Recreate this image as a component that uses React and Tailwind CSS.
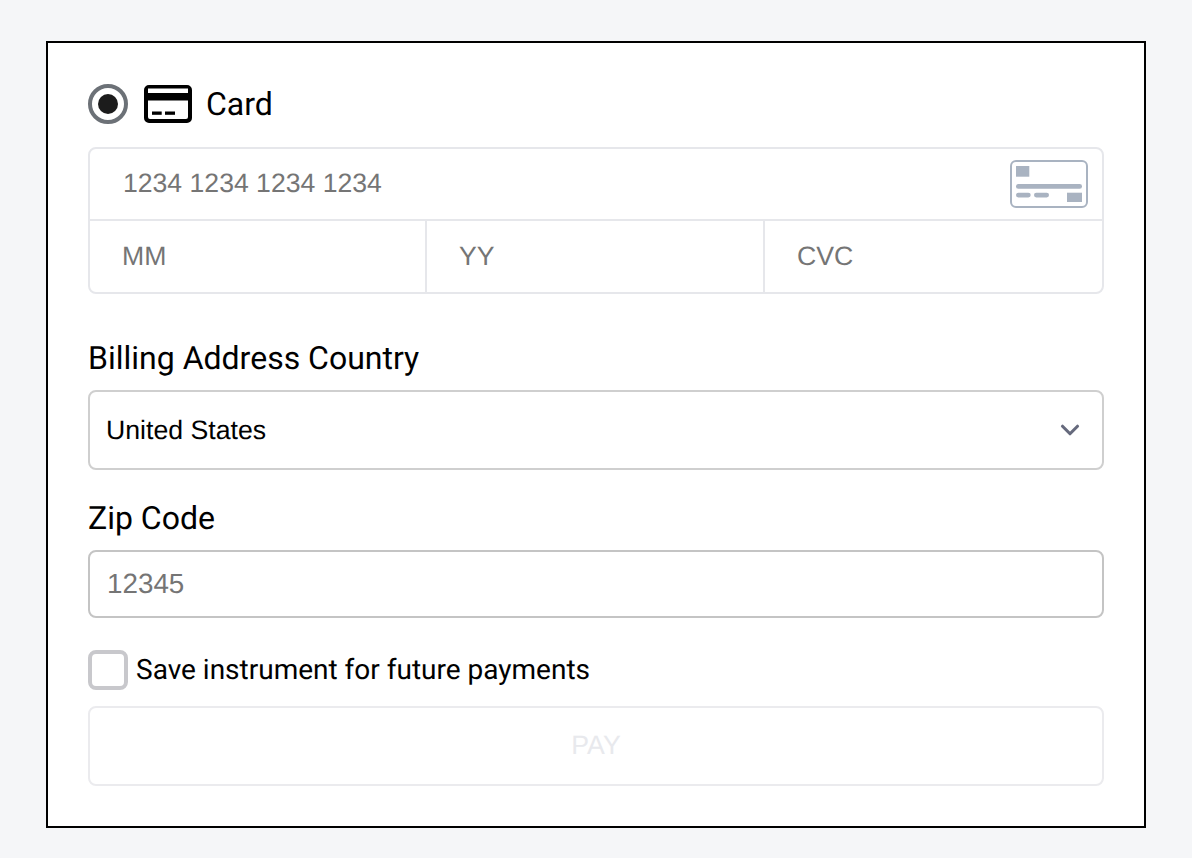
import React from 'react';
import { ChevronDown } from 'lucide-react';

const roboto = "font-['Roboto',sans-serif]";
const arial = "font-['Liberation_Sans',sans-serif]";

const CardIcon = () => (
  <svg width="48" height="38" viewBox="0 0 48 38" className="shrink-0">
    <path
      fillRule="evenodd"
      fill="#000"
      d="M5 0H43A5 5 0 0 1 48 5V33A5 5 0 0 1 43 38H5A5 5 0 0 1 0 33V5A5 5 0 0 1 5 0ZM4 3.5V8H44V3.5ZM4 15.5V32A2 2 0 0 0 6 34H42A2 2 0 0 0 44 32V15.5Z"
    />
    <rect x="8" y="26.5" width="9.7" height="3.3" fill="#000" />
    <rect x="21" y="26.5" width="10" height="3.3" fill="#000" />
  </svg>
);

const CardPlaceholder = () => (
  <svg width="78" height="48" viewBox="0 0 78 48" className="absolute right-[14px] top-[11px]">
    <rect x="1" y="1" width="76" height="46" rx="5" fill="#fff" stroke="#a9b3c1" strokeWidth="2" />
    <rect x="6" y="6" width="13.3" height="10.7" fill="#a9b3c1" />
    <rect x="6" y="24" width="66" height="4.7" rx="2.3" fill="#a9b3c1" />
    <rect x="6" y="32.7" width="14.7" height="4.7" rx="2.3" fill="#a9b3c1" />
    <rect x="24" y="32.7" width="15" height="4.7" rx="2.3" fill="#a9b3c1" />
    <rect x="57" y="32.7" width="15" height="9.3" fill="#a9b3c1" />
  </svg>
);

const App = () => {
  return (
    <div className="min-h-[858px] bg-[#f5f6f8] pt-[41px] pl-[46px] [text-rendering:geometricPrecision]">
      <div className="w-[1100px] h-[787px] border-2 border-black bg-white px-[40px] pt-[40px]">
        {/* Payment method */}
        <div className="flex items-center h-[42px]">
          <span className="w-[40px] h-[40px] rounded-full border-[4px] border-[#6c7177] flex items-center justify-center">
            <span className="w-[20px] h-[20px] rounded-full bg-[#1c1c1c]" />
          </span>
          <span className="ml-[16px] flex"><CardIcon /></span>
          <span className={`ml-[14px] text-[32px] leading-none text-black ${roboto}`}>Card</span>
        </div>

        {/* Card fields */}
        <div className="mt-[22px] w-[1016px] h-[147px] border-2 border-[#e6e7eb] rounded-lg flex flex-col">
          <div className={`relative h-[72px] border-b-2 border-[#e6e7eb] pl-[33px] flex items-center text-[26.6px] text-[#757575] ${arial}`}>
            1234 1234 1234 1234
            <CardPlaceholder />
          </div>
          <div className={`flex-1 flex text-[26.67px] text-[#757575] ${arial}`}>
            <div className="w-[337px] border-r-2 border-[#e6e7eb] pl-[32px] pb-[2px] flex items-center">MM</div>
            <div className="w-[338px] border-r-2 border-[#e6e7eb] pl-[32px] pb-[2px] flex items-center">YY</div>
            <div className="flex-1 pl-[32px] pb-[2px] flex items-center">CVC</div>
          </div>
        </div>

        {/* Country */}
        <div className={`mt-[44px] text-[32px] leading-[40px] text-black ${roboto}`}>Billing Address Country</div>
        <div className={`mt-[12px] w-[1016px] h-[80px] border-2 border-[#cfcfcf] rounded-lg pl-[16px] pr-[17px] flex items-center justify-between text-[26.67px] text-black ${arial}`}>
          United States
          <ChevronDown size={30} strokeWidth={2.5} className="text-[#666a7d]" />
        </div>

        {/* Zip */}
        <div className={`mt-[28px] text-[32px] leading-[40px] text-black ${roboto}`}>Zip Code</div>
        <div className={`mt-[12px] w-[1016px] h-[68px] border-2 border-[#c4c4c4] rounded-lg pl-[17px] flex items-center text-[27.8px] text-[#757575] ${arial}`}>
          12345
        </div>

        {/* Save */}
        <div className="mt-[32px] flex items-center h-[40px]">
          <span className="w-[40px] h-[40px] rounded-lg border-[4px] border-[#c8c8cc] bg-white" />
          <span className={`ml-[8px] text-[28px] text-black ${roboto}`}>Save instrument for future payments</span>
        </div>

        {/* Pay */}
        <div className={`mt-[16px] w-[1016px] h-[80px] border-2 border-[#ebebee] rounded-lg pb-[2px] flex items-center justify-center text-[26.67px] text-[#e8e9ed] ${arial}`}>
          PAY
        </div>
      </div>
    </div>
  );
};

export default App;
